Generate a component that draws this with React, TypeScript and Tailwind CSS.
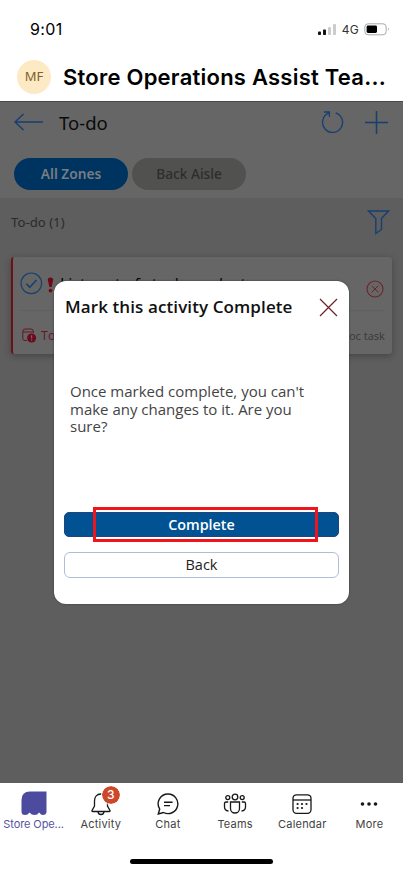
import React from 'react';

const inter = "font-['Inter',sans-serif]";
const open = "font-['Open_Sans','Noto_Sans',sans-serif]";
const noto = "font-['Noto_Sans','Open_Sans',sans-serif]";

function StatusBar() {
  return (
    <div className="flex h-[58px] items-center pl-[30px] pr-[13px]">
      <span className="text-[16px] leading-[20px] tracking-[0.4px]">9:01</span>
      <div className="ml-auto flex items-center">
        <svg width="19" height="13" viewBox="0 0 19 13">
          <rect x="0" y="8.5" width="3" height="3.5" rx=".8" fill="#111" />
          <rect x="5" y="6.5" width="3" height="5.5" rx=".8" fill="#111" />
          <rect x="10" y="4" width="3" height="8" rx=".8" fill="#ccc" />
          <rect x="15" y="1" width="3" height="11" rx=".8" fill="#ccc" />
        </svg>
        <span className="ml-[5px] mt-[2px] text-[12px] leading-[14px] tracking-[0.3px] text-[#333]">4G</span>
        <svg className="ml-[5px]" width="26" height="13" viewBox="0 0 26 13">
          <rect x=".8" y=".8" width="21.4" height="11" rx="3.2" fill="none" stroke="#aaa" />
          <rect x="2.6" y="2.6" width="10.4" height="7.4" rx="1.4" fill="#000" />
          <path d="M24 4.6q1.6 1.7 0 3.4z" fill="#999" />
        </svg>
      </div>
    </div>
  );
}

function Task() {
  return (
    <div className="ml-[11px] mr-[11px] mt-[11px] h-[97px] rounded-[3px] border-l-2 border-[#6d1119] bg-[#666] shadow-[0_2px_7px_rgba(0,0,0,0.28)]">
      <div className="ml-[7px] mr-[8px] flex h-[54px] items-center border-b border-[#606060]">
        <svg width="23" height="23" viewBox="0 0 23 23" fill="none" stroke="#17416e">
          <circle cx="11.3" cy="11.3" r="10.3" strokeWidth="1.2" />
          <path d="m6.3 11.7 3.5 3.6 6.7-7.3" strokeWidth="1.6" />
        </svg>
        <svg className="ml-[4px] mt-[3px]" width="7" height="16" viewBox="0 0 7 16" fill="#6c0a1c">
          <path d="M.8 2.8C.8-.2 6.2-.2 6.2 2.8L4.6 10.1H2.4z" />
          <circle cx="3.5" cy="13.6" r="1.9" />
        </svg>
        <span className={`${open} ml-[6px] whitespace-nowrap text-[16px] leading-5 text-black`}>List part of stock product</span>
        <svg className="ml-auto mt-[10px]" width="18" height="18" viewBox="0 0 18 18" fill="none" stroke="#6c2427">
          <circle cx="9" cy="9" r="8" strokeWidth="1.1" />
          <path d="m5.7 5.7 6.6 6.6m0-6.6-6.6 6.6" />
        </svg>
      </div>
      <div className="flex h-[43px] items-center pl-[9px] pr-[7px] pt-[7px]">
        <svg width="15" height="16" viewBox="0 0 15 16" fill="none" stroke="#641625">
          <path d="M5 12.5H3Q.8 12.5.8 10.3V3.5Q.8 1 3.2 1H9Q11.3 1 11.3 3.5V5M.8 4H11.3" />
          <circle cx="9.6" cy="10" r="4.5" fill="#6c0a1c" stroke="none" />
          <path d="M9.6 7.2v3.2m0 1v1.4" stroke="#706266" strokeWidth="1.3" />
        </svg>
        <span className={`${open} ml-[4px] text-[12.5px] leading-4 text-[#641625]`}>Today</span>
        <span className={`${noto} ml-auto text-[11px] leading-4 text-[#3c3c3c]`}>Ad hoc task</span>
      </div>
    </div>
  );
}

function Dialog() {
  return (
    <div className={`${open} absolute left-[54px] top-[179px] flex h-[323px] w-[295px] flex-col rounded-[12px] bg-white px-[10px] shadow-[0_0_2px_#333]`}>
      <div className="flex h-[52px] items-center pl-px">
        <h2 className="whitespace-nowrap text-[17px] font-semibold leading-5 tracking-[0.1px] text-[#111]">Mark this activity Complete</h2>
        <svg className="ml-auto mr-[1px]" width="19" height="19" viewBox="0 0 19 19" stroke="#702027" strokeWidth="1.2">
          <path d="m1 1 17 17M18 1 1 18" />
        </svg>
      </div>
      <p className="ml-[6px] mt-[50px] h-[129px] whitespace-nowrap text-[15px] leading-[17.6px] text-[#444]">
        Once marked complete, you can't<br />make any changes to it. Are you<br />sure?
      </p>
      <div className="relative h-[25px] shrink-0">
        <button className="h-[25px] w-full rounded-[5px] border border-[#22437c] bg-[#005292] text-[14.3px] font-semibold leading-[23px] text-white">Complete</button>
        <div className="absolute -top-[5px] left-[29px] h-[35px] w-[225px] border-[3px] border-[#ee151b]" />
      </div>
      <button className="mt-[15px] h-[26px] shrink-0 rounded-[6px] border border-[#b0bdd8] text-[14.5px] leading-[24px] text-[#222]">Back</button>
    </div>
  );
}

function Tab({ label, active, children }: { label: string; active?: boolean; children: React.ReactNode }) {
  return (
    <div className={`flex w-[67.2px] flex-col items-center pt-[8px] ${active ? 'tracking-[-0.1px] text-[#5654a2]' : 'tracking-[0.2px] text-[#424242]'}`}>
      <div className="relative flex h-[25px] items-center justify-center text-[#171717]">{children}</div>
      <span className="whitespace-nowrap text-[11px] leading-4">{label}</span>
    </div>
  );
}

export default function App() {
  return (
    <div className={`${inter} flex h-[873px] w-[403px] flex-col overflow-hidden bg-white text-black`}>
      <header className="h-[101px] shrink-0">
        <StatusBar />
        <div className="flex items-center pl-[17px] pt-[2px]">
          <div className={`${noto} flex size-[34px] items-center justify-center rounded-full bg-[#fdeac4] text-[13px] text-[#7c602d]`}>MF</div>
          <h1 className="ml-[12px] whitespace-nowrap text-[22px] font-semibold leading-8 tracking-[0.24px]">Store Operations Assist Tea...</h1>
        </div>
      </header>
      <main className="relative h-[682px] shrink-0 border-t border-[#494949] bg-[#5e5e5e]">
        <section className={`${noto} h-[96px] bg-[#666]`}>
          <div className="flex h-[43px] items-center pl-[14px] pr-[15px]">
            <svg className="-mt-[4px]" width="29" height="18" viewBox="0 0 29 18" fill="none" stroke="#173f70" strokeWidth="1.5">
              <path d="M9.5 1 1 9l8.5 8M1 9h28" />
            </svg>
            <h2 className="-mt-[2px] ml-[16px] text-[18.5px] leading-6 text-[#0b0b0b]">To-do</h2>
            <svg className="ml-auto -mt-[3px]" width="24" height="24" viewBox="0 0 24 24" fill="none" stroke="#173f70" strokeWidth="1.3">
              <path d="M14.7 2.9A10 10 0 1 1 7.6 3.2M3 2H8.4v5" />
            </svg>
            <svg className="-mt-[2px] ml-[20px]" width="23" height="23" viewBox="0 0 23 23" stroke="#173f70" strokeWidth="1.5">
              <path d="M11.5 0v23M0 11.5h23" />
            </svg>
          </div>
          <div className="mt-[13px] flex gap-[4px] pl-[14px]">
            <button className="h-[32px] w-[114px] rounded-full bg-[#003460] text-[13.7px] font-semibold text-[#777d83]">All Zones</button>
            <button className="h-[32px] w-[114px] rounded-full bg-[#51514f] text-[13.7px] font-medium text-[#2d2d2d]">Back Aisle</button>
          </div>
        </section>
        <div className={`${noto} flex h-[48px] items-center pl-[11px] pr-[13px]`}>
          <span className="mt-[2px] text-[13.2px] text-[#2b2b2b]">To-do (1)</span>
          <svg className="ml-auto" width="23" height="25" viewBox="0 0 23 25" fill="none" stroke="#173f70" strokeWidth="1.4">
            <path d="M1.5 1h20L14.5 8.5v11L8.8 23.5v-15z" />
          </svg>
        </div>
        <Task />
        <Dialog />
      </main>
      <footer className="flex h-[90px] flex-col items-center">
        <nav className="flex h-[75px] w-full">
          <Tab label="Store Ope..." active>
            <svg width="26" height="25" viewBox="0 0 26 25" fill="#4d4ba0">
              <path d="M9 .5H25.5V21.5Q24.7 24 22 24 19.8 24 18.2 21.4 16.4 24 13.5 24T8.5 21.4Q6.8 24 4 24 .5 24 .5 20.5V9Q.5.5 9 .5z" />
            </svg>
          </Tab>
          <Tab label="Activity">
            <svg width="22" height="24" viewBox="0 0 22 24" fill="none" stroke="currentColor" strokeWidth="1.3">
              <path d="M11 2C6.5 2 4.5 5.3 4.5 9v5L2 18.5q-.3 1 .8 1h16.4q1.1 0 .8-1L17.5 14V9C17.5 5.3 15.5 2 11 2zM8 19.5q0 3 3 3t3-3" />
            </svg>
            <span className="absolute left-[12px] -top-[5px] flex size-[18px] items-center justify-center rounded-full bg-[#cd472b] text-[12px] font-medium text-white outline outline-1 outline-white">3</span>
          </Tab>
          <Tab label="Chat">
            <svg width="24" height="24" viewBox="0 0 24 24" fill="none" stroke="currentColor" strokeWidth="1.4">
              <path d="M12.2 2A9.8 9.8 0 1 1 7.5 20.5L2.3 22l1.4-5A9.8 9.8 0 0 1 12.2 2zM8 10.2h8.6M8 13.6h6" />
            </svg>
          </Tab>
          <Tab label="Teams">
            <svg width="24" height="22" viewBox="0 0 24 22" fill="none" stroke="currentColor" strokeWidth="1.3">
              <circle cx="12" cy="4" r="2.8" /><circle cx="4.8" cy="4.6" r="2" /><circle cx="19.2" cy="4.6" r="2" />
              <path d="M7.5 9h9v6.5a4.5 4.5 0 0 1-9 0zM5.2 9H3Q1.5 9 1.5 10.5v3.5q0 3.5 4 4M18.8 9H21q1.5 0 1.5 1.5V14q0 3.5-4 4" />
            </svg>
          </Tab>
          <Tab label="Calendar">
            <svg width="20" height="22" viewBox="0 0 20 22" fill="none" stroke="currentColor" strokeWidth="1.3">
              <rect x="1" y="1.8" width="18" height="18.5" rx="3.5" />
              <path d="M1 7h18" />
              <g fill="currentColor" stroke="none">
                <circle cx="5.6" cy="11" r="1.1" /><circle cx="10" cy="11" r="1.1" /><circle cx="14.5" cy="11" r="1.1" />
                <circle cx="5.6" cy="15" r="1.1" /><circle cx="10" cy="15" r="1.1" />
              </g>
            </svg>
          </Tab>
          <Tab label="More">
            <svg width="18" height="6" viewBox="0 0 18 6" fill="currentColor">
              <circle cx="2.5" cy="3" r="1.8" /><circle cx="9" cy="3" r="1.8" /><circle cx="15.5" cy="3" r="1.8" />
            </svg>
          </Tab>
        </nav>
        <div className="mt-[1px] h-[5px] w-[143px] rounded-full bg-black" />
      </footer>
    </div>
  );
}
